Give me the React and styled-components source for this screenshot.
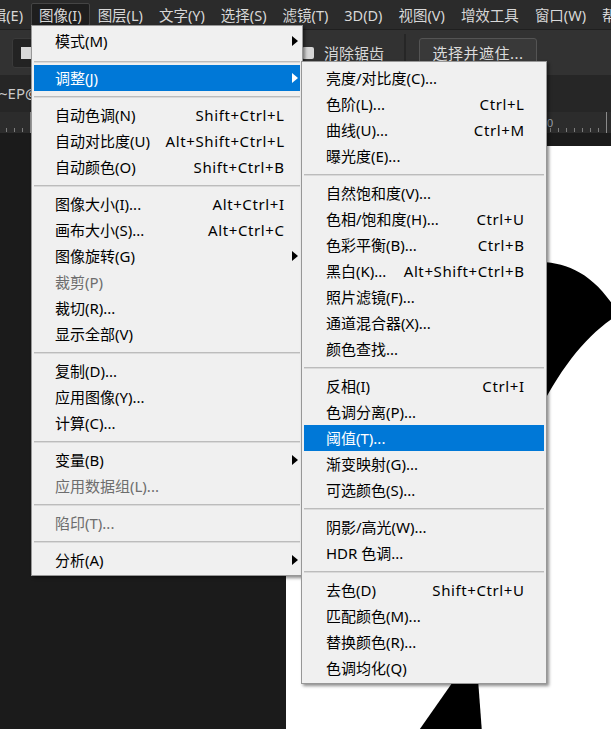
import React from 'react';
import styled, { createGlobalStyle, css } from 'styled-components';

const Global = createGlobalStyle`
  html, body { margin: 0; padding: 0; background: #1b1b1b; }
  body {
    width: 611px; height: 729px; overflow: hidden;
    font-family: "Noto Sans", "Noto Sans CJK SC", sans-serif;
  }
`;

const FONT = `"Noto Sans", "Noto Sans CJK SC", sans-serif`;

const Screen = styled.div`
  position: relative;
  width: 611px;
  height: 729px;
  overflow: hidden;
  display: flex;
  flex-direction: column;
  background: #1b1b1b;
  font-family: ${FONT};
`;

/* ---------- top menu bar ---------- */
const MenuBar = styled.div`
  flex: none;
  height: 29px;
  display: flex;
  align-items: center;
  background: #2b2b2b;
  border-bottom: 1px solid #1f1f1f;
  white-space: nowrap;
  overflow: hidden;
`;

const LeadClip = styled.div`
  flex: none;
  width: 31px;
  display: flex;
  justify-content: flex-end;
  overflow: hidden;
`;

const TopItem = styled.div`
  flex: none;
  height: 23px;
  box-sizing: border-box;
  display: flex;
  align-items: center;
  padding: 0 7px;
  border: 1px solid transparent;
  border-radius: 2px;
  color: #d8d8d8;
  font-size: 14.5px;
  ${(p) => p.$active && css`
    background: #1e1e1e;
    border-color: #454545;
  `}
`;

/* ---------- options bar ---------- */
const OptionsBar = styled.div`
  flex: none;
  height: 45px;
  display: flex;
  align-items: center;
  background: #323232;
  padding-left: 12px;
  white-space: nowrap;
`;

const ToolButton = styled.div`
  flex: none;
  width: 40px;
  height: 30px;
  box-sizing: border-box;
  display: flex;
  align-items: center;
  padding-left: 8px;
  background: #232323;
  border: 1px solid #3a3a3a;
  border-radius: 3px;
`;

const Swatch = styled.div`
  width: 13px;
  height: 12px;
  background: #d9d9d9;
`;

const CheckBox = styled.div`
  flex: none;
  margin-left: 250px;
  width: 12px;
  height: 12px;
  background: #d6d6d6;
  border-radius: 2px;
`;

const OptLabel = styled.span`
  margin-left: 10px;
  color: #d8d8d8;
  font-size: 15px;
`;

const VSep = styled.div`
  flex: none;
  align-self: stretch;
  width: 2px;
  margin: 4px 0 0 20px;
  background: #262626;
`;

const OptButton = styled.div`
  flex: none;
  margin-left: 13px;
  width: 118px;
  height: 30px;
  box-sizing: border-box;
  display: flex;
  align-items: center;
  justify-content: center;
  background: #393939;
  border: 1px solid #545454;
  border-radius: 3px;
  color: #dcdcdc;
  font-size: 15px;
  letter-spacing: 0.5px;
`;

/* ---------- document tab + ruler ---------- */
const TabBar = styled.div`
  flex: none;
  height: 37px;
  display: flex;
  align-items: center;
  background: #262626;
  white-space: nowrap;
  overflow: hidden;
`;

const TabTitle = styled.span`
  color: #c9c9c9;
  font-size: 15px;
  margin: -3px 0 0 -1px;
`;

const Ruler = styled.div`
  flex: none;
  height: 21px;
  display: flex;
  align-items: flex-start;
  background-color: #2c2c2c;
  background-image:
    repeating-linear-gradient(90deg, transparent 0 30px, #8a8a8a 30px 31px, transparent 31px 64px),
    repeating-linear-gradient(90deg, transparent 0 6px, #7c7c7c 6px 7px, transparent 7px 8px);
  background-size: 100% 21px, 100% 4px;
  background-position: 0 0, 0 16px;
  background-repeat: no-repeat;
  white-space: nowrap;
`;

const RulerLabel = styled.span`
  margin-left: ${(p) => p.$ml}px;
  margin-top: 6px;
  font-size: 11px;
  line-height: 11px;
  color: #9aa6b4;
  font-family: "Liberation Sans", sans-serif;
`;

/* ---------- workspace ---------- */
const Workspace = styled.div`
  flex: 1;
  min-height: 0;
  display: flex;
  padding: 13px 0 0 286px;
  background: #1b1b1b;
`;

const Canvas = styled.div`
  flex: 1;
  background: #ffffff;
  overflow: hidden;
`;

/* ---------- menus ---------- */
const Menu = styled.div`
  position: absolute;
  left: ${(p) => p.$x}px;
  top: ${(p) => p.$y}px;
  width: ${(p) => p.$w}px;
  box-sizing: border-box;
  padding: ${(p) => p.$pt}px 2px 2px 2px;
  background: #f0f0f0;
  border: 1px solid #979797;
  box-shadow: 2px 2px 3px rgba(0, 0, 0, 0.45);
  font-family: ${FONT};
`;

const Item = styled.div`
  position: relative;
  height: 26px;
  box-sizing: border-box;
  display: flex;
  align-items: center;
  padding: 0 ${(p) => p.$pr}px 1px ${(p) => p.$pl}px;
  font-size: 15px;
  line-height: 20px;
  white-space: nowrap;
  color: ${(p) => (p.$disabled ? '#6d6d6d' : '#000000')};
  ${(p) => p.$active && css`
    background: #0078d7;
    color: #ffffff;
  `}
`;

const Label = styled.span`
  flex: 1;
`;

const Shortcut = styled.span`
  flex: none;
  letter-spacing: 0.6px;
  margin-right: -0.6px;
`;

const Arrow = styled.span`
  position: absolute;
  right: 2px;
  top: 8px;
  width: 0;
  height: 0;
  border-left: 6px solid currentColor;
  border-top: 5px solid transparent;
  border-bottom: 5px solid transparent;
`;

const Sep = styled.div`
  height: 11px;
  box-sizing: border-box;
  padding-top: ${(p) => (p.$low ? 7 : 5)}px;
  &::after {
    content: '';
    display: block;
    height: 1px;
    background: #bcbcbc;
    border-bottom: 1px solid #dadada;
  }
`;

const mainItems = [
  { l: '模式(M)', arrow: true },
  { sep: true, low: true },
  { l: '调整(J)', arrow: true, active: true },
  { sep: true },
  { l: '自动色调(N)', s: 'Shift+Ctrl+L' },
  { l: '自动对比度(U)', s: 'Alt+Shift+Ctrl+L' },
  { l: '自动颜色(O)', s: 'Shift+Ctrl+B' },
  { sep: true },
  { l: '图像大小(I)...', s: 'Alt+Ctrl+I' },
  { l: '画布大小(S)...', s: 'Alt+Ctrl+C' },
  { l: '图像旋转(G)', arrow: true },
  { l: '裁剪(P)', disabled: true },
  { l: '裁切(R)...' },
  { l: '显示全部(V)' },
  { sep: true },
  { l: '复制(D)...' },
  { l: '应用图像(Y)...' },
  { l: '计算(C)...' },
  { sep: true },
  { l: '变量(B)', arrow: true },
  { l: '应用数据组(L)...', disabled: true },
  { sep: true },
  { l: '陷印(T)...', disabled: true },
  { sep: true },
  { l: '分析(A)', arrow: true },
];

const subItems = [
  { l: '亮度/对比度(C)...' },
  { l: '色阶(L)...', s: 'Ctrl+L' },
  { l: '曲线(U)...', s: 'Ctrl+M' },
  { l: '曝光度(E)...' },
  { sep: true },
  { l: '自然饱和度(V)...' },
  { l: '色相/饱和度(H)...', s: 'Ctrl+U' },
  { l: '色彩平衡(B)...', s: 'Ctrl+B' },
  { l: '黑白(K)...', s: 'Alt+Shift+Ctrl+B' },
  { l: '照片滤镜(F)...' },
  { l: '通道混合器(X)...' },
  { l: '颜色查找...' },
  { sep: true },
  { l: '反相(I)', s: 'Ctrl+I' },
  { l: '色调分离(P)...' },
  { l: '阈值(T)...', active: true },
  { l: '渐变映射(G)...' },
  { l: '可选颜色(S)...' },
  { sep: true },
  { l: '阴影/高光(W)...' },
  { l: 'HDR 色调...' },
  { sep: true },
  { l: '去色(D)', s: 'Shift+Ctrl+U' },
  { l: '匹配颜色(M)...' },
  { l: '替换颜色(R)...' },
  { l: '色调均化(Q)' },
];

function MenuList({ items, pl, pr }) {
  return items.map((it, i) =>
    it.sep ? (
      <Sep key={i} $low={it.low} />
    ) : (
      <Item key={i} $pl={pl} $pr={pr} $active={it.active} $disabled={it.disabled}>
        <Label>{it.l}</Label>
        {it.s && <Shortcut>{it.s}</Shortcut>}
        {it.arrow && <Arrow />}
      </Item>
    )
  );
}

const topItems = ['图层(L)', '文字(Y)', '选择(S)', '滤镜(T)', '3D(D)', '视图(V)', '增效工具', '窗口(W)', '帮助(H)'];

export default function App() {
  return (
    <>
      <Global />
      <Screen>
        <MenuBar>
          <LeadClip>
            <TopItem>文件(F)</TopItem>
            <TopItem>编辑(E)</TopItem>
          </LeadClip>
          <TopItem $active>图像(I)</TopItem>
          {topItems.map((t) => (
            <TopItem key={t}>{t}</TopItem>
          ))}
        </MenuBar>

        <OptionsBar>
          <ToolButton>
            <Swatch />
          </ToolButton>
          <CheckBox />
          <OptLabel>消除锯齿</OptLabel>
          <VSep />
          <OptButton>选择并遮住...</OptButton>
        </OptionsBar>

        <TabBar>
          <TabTitle>~EP@ 66.7% (图层 1, RGB/8)</TabTitle>
        </TabBar>

        <Ruler>
          <RulerLabel $ml={547}>0</RulerLabel>
          <RulerLabel $ml={58}>2</RulerLabel>
        </Ruler>

        <Workspace>
          <Canvas>
            <svg width="325" height="600" viewBox="0 0 325 600" style={{ display: 'block' }}>
              <path
                d="M 225 118 C 262 112, 300 115, 330 164 L 330 170 C 300 190, 275 220, 248 275 Z"
                fill="#000"
              />
              <path d="M 178 520 L 191 520 L 197 600 L 122 600 Z" fill="#000" />
            </svg>
          </Canvas>
        </Workspace>

        <Menu $x={31} $y={25} $w={272} $pt={2}>
          <MenuList items={mainItems} pl={21} pr={16} />
        </Menu>

        <Menu $x={301} $y={61} $w={246} $pt={3}>
          <MenuList items={subItems} pl={22} pr={20} />
        </Menu>
      </Screen>
    </>
  );
}
